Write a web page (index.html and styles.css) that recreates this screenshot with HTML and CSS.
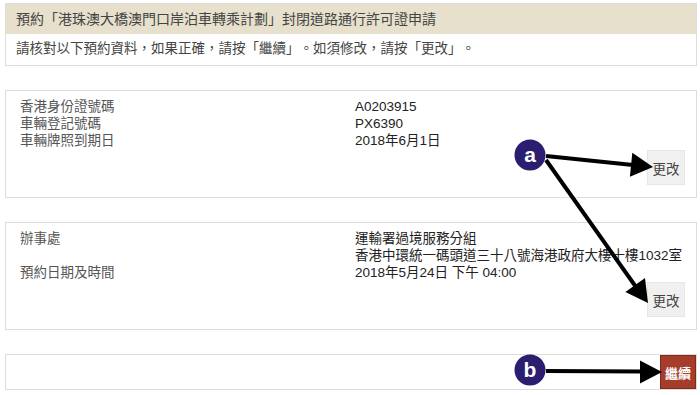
FILE: index.html
```html
<!DOCTYPE html>
<html lang="zh-Hant">
<head>
    <meta charset="UTF-8">
    <meta name="viewport" content="width=device-width, initial-scale=1.0">
    <title>封閉道路通行許可證申請</title>
    <link rel="stylesheet" href="styles.css">
</head>
<body>
    <div class="page">
        <!-- Intro -->
        <div class="panel">
            <div class="panel-head">預約「港珠澳大橋澳門口岸泊車轉乘計劃」封閉道路通行許可證申請</div>
            <div class="panel-note">請核對以下預約資料，如果正確，請按「繼續」。如須修改，請按「更改」。</div>
        </div>

        <!-- Vehicle details -->
        <div class="panel panel-data">
            <div class="rows">
                <div class="label">香港身份證號碼</div>
                <div class="value">A0203915</div>
                <div class="label">車輛登記號碼</div>
                <div class="value">PX6390</div>
                <div class="label">車輛牌照到期日</div>
                <div class="value">2018年6月1日</div>
            </div>
            <div class="actions">
                <button class="btn-edit">更改</button>
            </div>
        </div>

        <!-- Office and time -->
        <div class="panel panel-data">
            <div class="rows">
                <div class="label">辦事處</div>
                <div class="value">運輸署過境服務分組<br>香港中環統一碼頭道三十八號海港政府大樓十樓1032室</div>
                <div class="label">預約日期及時間</div>
                <div class="value">2018年5月24日 下午 04:00</div>
            </div>
            <div class="actions">
                <button class="btn-edit">更改</button>
            </div>
        </div>

        <!-- Continue -->
        <div class="panel panel-submit">
            <button class="btn-next">繼續</button>
        </div>
    </div>

    <!-- Callouts -->
    <svg class="callouts" width="700" height="395" viewBox="0 0 700 395">
        <line x1="546" y1="156" x2="633" y2="165" stroke="#000" stroke-width="4"/>
        <polygon points="653,167 629.9,176.7 632.3,152.8" fill="#000"/>

        <line x1="546" y1="160" x2="636" y2="287" stroke="#000" stroke-width="4"/>
        <polygon points="648,303 625.4,292.1 645,278.1" fill="#000"/>

        <circle cx="530" cy="155" r="15.5" fill="#2b1d70"/>
        <text x="530" y="162" class="callout-text">a</text>

        <line x1="546" y1="371" x2="642" y2="371.5" stroke="#000" stroke-width="4"/>
        <polygon points="662,372 640,360.5 640,383.5" fill="#000"/>

        <circle cx="530" cy="370" r="15.5" fill="#2b1d70"/>
        <text x="530" y="377" class="callout-text">b</text>
    </svg>
</body>
</html>
```

FILE: styles.css
```css
* {
    margin: 0;
    padding: 0;
    box-sizing: border-box;
}

body {
    font-family: "Liberation Sans", "Noto Sans CJK TC", sans-serif;
    font-size: 13.5px;
    color: #333;
    background: #fff;
    position: relative;
    width: 700px;
    height: 395px;
    overflow: hidden;
    text-spacing-trim: space-all;
}

.page {
    display: flex;
    flex-direction: column;
    gap: 24px;
    padding: 3px 3px 0 5px;
}

/* Panels */
.panel {
    border: 1px solid #ddd;
    background: #fff;
}

.panel-head {
    background: #e6e0cc;
    height: 30px;
    line-height: 30px;
    padding-left: 10px;
    font-size: 14px;
    color: #444;
}

.panel-note {
    height: 31px;
    line-height: 30px;
    padding-left: 10px;
    color: #444;
}

.panel-data {
    padding: 7px 11px 12px 14px;
}

.rows {
    display: grid;
    grid-template-columns: 335px 1fr;
    line-height: 17px;
}

.label {
    color: #555;
}

.value {
    color: #222;
}

.actions {
    display: flex;
    justify-content: flex-end;
    margin-top: 1px;
}

.btn-edit {
    width: 38px;
    height: 35px;
    border: 1px solid #e6e6e6;
    background: #f0f0f0;
    color: #444;
    font-family: inherit;
    font-size: 13.5px;
}

.panel-submit {
    height: 36px;
    display: flex;
    justify-content: flex-end;
}

.btn-next {
    width: 36px;
    height: 34px;
    border: 1px solid #7d2a1d;
    background: #a63d2b;
    color: #fff;
    font-family: inherit;
    font-size: 13px;
    font-weight: bold;
}

/* Callout overlay */
.callouts {
    position: absolute;
    top: 0;
    left: 0;
    pointer-events: none;
}

.callout-text {
    fill: #fff;
    font-family: "Liberation Sans", sans-serif;
    font-size: 21px;
    font-weight: bold;
    text-anchor: middle;
}
```
